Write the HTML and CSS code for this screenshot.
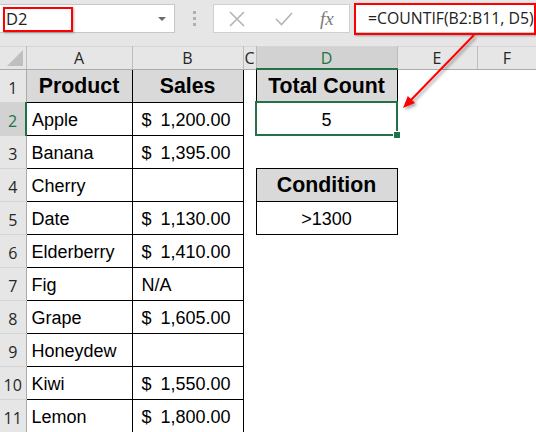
FILE: index.html
```html
<!DOCTYPE html>
<html lang="en">
<head>
    <meta charset="UTF-8">
    <meta name="viewport" content="width=device-width, initial-scale=1.0">
    <title>COUNTIF</title>
    <link rel="stylesheet" href="styles.css">
</head>
<body>
    <div class="excel">
        <!-- Barra de formulas -->
        <div class="formula-row">
            <div class="name-box">
                <span class="cell-ref">D2</span>
                <span class="caret"></span>
            </div>
            <div class="grip"><i></i><i></i><i></i></div>
            <div class="fx-buttons">
                <svg class="icon" width="18" height="18" viewBox="0 0 18 18">
                    <path d="M2 2 L16 16 M16 2 L2 16" stroke="#b4b4b4" stroke-width="1.6" fill="none"/>
                </svg>
                <svg class="icon" width="20" height="18" viewBox="0 0 20 18">
                    <path d="M2 9 L7.5 14.5 L18 3" stroke="#b4b4b4" stroke-width="1.6" fill="none"/>
                </svg>
                <span class="fx">fx</span>
            </div>
            <div class="formula-input">=COUNTIF(B2:B11, D5)</div>
            <div class="mark mark-name"></div>
            <div class="mark mark-formula"></div>
        </div>

        <!-- Hoja -->
        <table class="sheet">
            <colgroup>
                <col class="c-corner">
                <col class="c-a">
                <col class="c-b">
                <col class="c-c">
                <col class="c-d">
                <col class="c-e">
                <col class="c-f">
            </colgroup>
            <thead>
                <tr class="col-heads">
                    <th class="corner"><span class="tri"></span></th>
                    <th>A</th>
                    <th>B</th>
                    <th>C</th>
                    <th class="active">D</th>
                    <th>E</th>
                    <th>F</th>
                </tr>
            </thead>
            <tbody>
                <tr>
                    <th class="rh">1</th>
                    <td class="b hd">Product</td>
                    <td class="b hd">Sales</td>
                    <td></td>
                    <td class="b hd">Total Count</td>
                    <td></td><td></td>
                </tr>
                <tr>
                    <th class="rh active">2</th>
                    <td class="b">Apple</td>
                    <td class="b"><div class="acct"><span>$</span><span>1,200.00</span></div></td>
                    <td></td>
                    <td class="b center selected">5<span class="handle"></span></td>
                    <td></td><td></td>
                </tr>
                <tr>
                    <th class="rh">3</th>
                    <td class="b">Banana</td>
                    <td class="b"><div class="acct"><span>$</span><span>1,395.00</span></div></td>
                    <td></td><td></td><td></td><td></td>
                </tr>
                <tr>
                    <th class="rh">4</th>
                    <td class="b">Cherry</td>
                    <td class="b"></td>
                    <td></td>
                    <td class="b hd">Condition</td>
                    <td></td><td></td>
                </tr>
                <tr>
                    <th class="rh">5</th>
                    <td class="b">Date</td>
                    <td class="b"><div class="acct"><span>$</span><span>1,130.00</span></div></td>
                    <td></td>
                    <td class="b center">&gt;1300</td>
                    <td></td><td></td>
                </tr>
                <tr>
                    <th class="rh">6</th>
                    <td class="b">Elderberry</td>
                    <td class="b"><div class="acct"><span>$</span><span>1,410.00</span></div></td>
                    <td></td><td></td><td></td><td></td>
                </tr>
                <tr>
                    <th class="rh">7</th>
                    <td class="b">Fig</td>
                    <td class="b na">N/A</td>
                    <td></td><td></td><td></td><td></td>
                </tr>
                <tr>
                    <th class="rh">8</th>
                    <td class="b">Grape</td>
                    <td class="b"><div class="acct"><span>$</span><span>1,605.00</span></div></td>
                    <td></td><td></td><td></td><td></td>
                </tr>
                <tr>
                    <th class="rh">9</th>
                    <td class="b">Honeydew</td>
                    <td class="b"></td>
                    <td></td><td></td><td></td><td></td>
                </tr>
                <tr>
                    <th class="rh">10</th>
                    <td class="b">Kiwi</td>
                    <td class="b"><div class="acct"><span>$</span><span>1,550.00</span></div></td>
                    <td></td><td></td><td></td><td></td>
                </tr>
                <tr>
                    <th class="rh">11</th>
                    <td class="b">Lemon</td>
                    <td class="b"><div class="acct"><span>$</span><span>1,800.00</span></div></td>
                    <td></td><td></td><td></td><td></td>
                </tr>
            </tbody>
        </table>

        <!-- Flecha de anotacion -->
        <svg class="arrow" width="536" height="432" viewBox="0 0 536 432">
            <defs>
                <filter id="shadow" x="-20%" y="-20%" width="140%" height="140%">
                    <feDropShadow dx="2" dy="2" stdDeviation="1.5" flood-color="#000" flood-opacity="0.35"/>
                </filter>
            </defs>
            <g filter="url(#shadow)">
                <line x1="474" y1="35" x2="410" y2="101" stroke="#ff0000" stroke-width="2"/>
                <polygon points="403,108 415,103 407.8,95.9" fill="#ff0000"/>
            </g>
        </svg>
    </div>
</body>
</html>
```

FILE: styles.css
```css
/* Contenedor general */
body {
    margin: 0;
    background-color: #fff;
    overflow: hidden;
}

.excel {
    position: relative;
    width: 536px;
    height: 432px;
    overflow: hidden;
    font-family: "Liberation Sans", Arial, sans-serif;
}

/* Barra de formulas */
.formula-row {
    position: relative;
    height: 46px;
    background-color: #e6e6e6;
    display: flex;
    align-items: flex-start;
    padding-top: 4px;
    box-sizing: border-box;
}

.name-box {
    width: 175px;
    height: 29px;
    background-color: #fff;
    border: 1px solid #c6c6c6;
    border-left: none;
    box-sizing: border-box;
    display: flex;
    align-items: center;
    justify-content: space-between;
    padding: 0 8px 0 6px;
}

.cell-ref {
    font-family: "Open Sans", sans-serif;
    font-size: 16.5px;
    color: #222;
}

.caret {
    width: 0;
    height: 0;
    border-left: 4px solid transparent;
    border-right: 4px solid transparent;
    border-top: 4px solid #6a6a6a;
}

.grip {
    width: 38px;
    height: 29px;
    display: flex;
    flex-direction: column;
    align-items: center;
    justify-content: center;
    gap: 3px;
}

.grip i {
    width: 3px;
    height: 3px;
    background-color: #b0b0b0;
}

.fx-buttons {
    width: 137px;
    height: 29px;
    background-color: #fff;
    border: 1px solid #d0d0d0;
    box-sizing: border-box;
    display: flex;
    align-items: center;
    padding-left: 14px;
    gap: 28px;
}

.fx {
    font-family: "Liberation Serif", serif;
    font-style: italic;
    font-size: 19px;
    color: #7a7a7a;
    margin-left: -2px;
}

.formula-input {
    margin-left: 5px;
    flex: 1;
    height: 29px;
    background-color: #fff;
    border: 1px solid #c6c6c6;
    border-right: none;
    box-sizing: border-box;
    padding-left: 12px;
    font-family: "Open Sans", sans-serif;
    font-size: 15.8px;
    line-height: 27px;
    color: #222;
    white-space: nowrap;
}

/* Recuadros rojos */
.mark {
    position: absolute;
    border: 2px solid #ff0000;
    box-sizing: border-box;
    box-shadow: 1px 1px 2px rgba(0, 0, 0, 0.3);
}

.mark-name {
    left: 3px;
    top: 7px;
    width: 70px;
    height: 25px;
}

.mark-formula {
    left: 354px;
    top: 3px;
    width: 182px;
    height: 32px;
}

/* Hoja de calculo */
.sheet {
    border-collapse: collapse;
    table-layout: fixed;
    width: 537px;
}

.c-corner { width: 26px; }
.c-a { width: 106px; }
.c-b { width: 111px; }
.c-c { width: 13px; }
.c-d { width: 141px; }
.c-e { width: 80px; }
.c-f { width: 60px; }

.col-heads th {
    height: 21px;
    padding: 0;
    background-color: #e6e6e6;
    border-top: 1px solid #d6d6d6;
    border-right: 1px solid #bdbdbd;
    border-bottom: 1px solid #ababab;
    font-family: "Open Sans", sans-serif;
    font-size: 16px;
    line-height: 20px;
    font-weight: normal;
    color: #262626;
    overflow: hidden;
    white-space: nowrap;
}

.col-heads th.active {
    background-color: #d2d2d2;
    color: #217346;
    border-bottom: 2px solid #217346;
}

.corner {
    position: relative;
}

.tri {
    position: absolute;
    right: 3px;
    bottom: 3px;
    width: 0;
    height: 0;
    border-left: 16px solid transparent;
    border-bottom: 16px solid #bfbfbf;
}

tbody tr {
    height: 33px;
}

.rh {
    padding: 0 0 4px 0;
    background-color: #e6e6e6;
    border-right: 1px solid #ababab;
    border-bottom: 1px solid #d4d4d4;
    font-family: "Open Sans", sans-serif;
    font-size: 16px;
    font-weight: normal;
    color: #262626;
    vertical-align: bottom;
    text-align: center;
    line-height: 20px;
}

.rh.active {
    background-color: #d2d2d2;
    color: #217346;
    border-right: 2px solid #217346;
}

td {
    padding: 0 0 5px 5px;
    font-size: 18px;
    line-height: 20px;
    color: #000;
    vertical-align: bottom;
    white-space: nowrap;
}

td.b {
    border: 1px solid #000;
}

td.hd {
    background-color: #d9d9d9;
    font-size: 21.3px;
    font-weight: bold;
    text-align: center;
    padding: 0 0 4px 0;
    line-height: 24px;
}

td.center {
    text-align: center;
    padding-left: 0;
}

td.na {
    padding-left: 9px;
}

.acct {
    display: flex;
    justify-content: space-between;
    padding: 0 12px 0 4px;
}

/* Celda seleccionada */
td.selected {
    position: relative;
    outline: 2px solid #217346;
    outline-offset: -1px;
}

.handle {
    position: absolute;
    right: -4px;
    bottom: -4px;
    width: 6px;
    height: 6px;
    background-color: #217346;
    border: 1px solid #fff;
}

/* Flecha */
.arrow {
    position: absolute;
    left: 0;
    top: 0;
    pointer-events: none;
}
```
